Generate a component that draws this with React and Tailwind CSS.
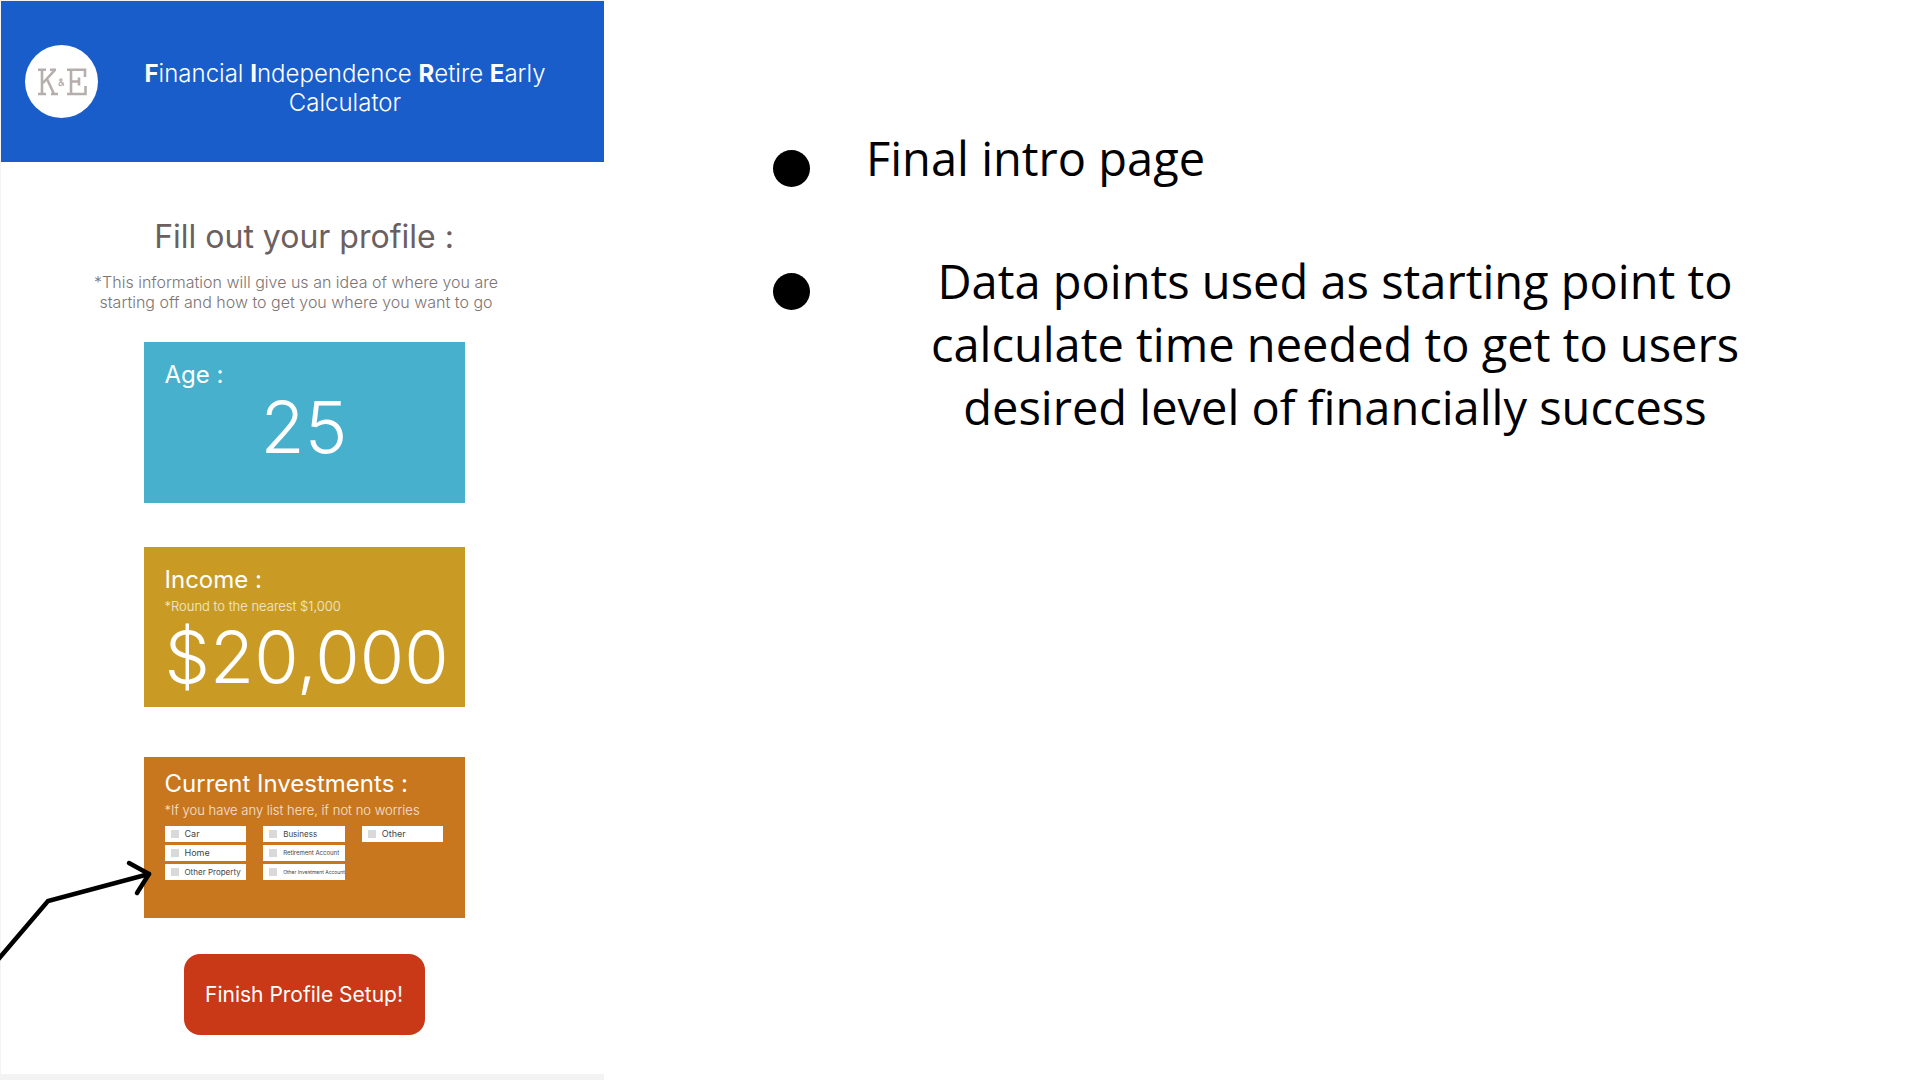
const INVESTMENTS = [
  { id: 'car', label: 'Car', size: 'text-[9px]' },
  { id: 'home', label: 'Home', size: 'text-[9px]' },
  { id: 'other-property', label: 'Other Property', size: 'text-[8px]' },
  { id: 'business', label: 'Business', size: 'text-[8px]' },
  { id: 'retirement', label: 'Retirement Account', size: 'text-[6px]' },
  { id: 'other-investment', label: 'Other Investment Account', size: 'text-[5px]' },
  { id: 'other', label: 'Other', size: 'text-[9px]' },
];

function Logo() {
  return (
    <div className="flex size-[73px] shrink-0 items-center justify-center rounded-full bg-white text-[#b5aeac]">
      <svg viewBox="0 0 50 28" className="h-7 w-[50px]" fill="none" stroke="currentColor" strokeWidth="2.6" aria-label="K and E" role="img">
        <path d="M1 1.8H9M5 1.8V26M1 26H9M18 1.8L6 15M13 1.8H19M10 11L17 26M14 26H21" />
        <path d="M30 1.8H48V9M34 1.8V26M30 26H48.5V18M34 13.5H42M42 9.5V17.5" />
        <path strokeWidth="1.3" d="M27 17.5L22.8 12.500C22.3 10.5 25.5 10.5 25 12.5C24.5 13.7 21.8 14.5 22 16.5C22.5 18.5 25.5 17.8 26.5 14.5" />
      </svg>
    </div>
  );
}

function Header() {
  return (
    <header className="flex h-[161px] items-center gap-3 bg-[#195dcb] px-6">
      <Logo />
      <h1 className="flex-1 pt-3 text-center text-2xl leading-[29px] font-light text-white">
        <span className="font-bold">F</span>inancial <span className="font-bold">I</span>ndependence{' '}
        <span className="font-bold">R</span>etire <span className="font-bold">E</span>arly
        <br />
        Calculator
      </h1>
    </header>
  );
}

function Arrow() {
  return (
    <svg className="pointer-events-none absolute top-[100px] -left-36 h-[110px] w-40" viewBox="0 0 160 110" fill="none" stroke="#000" strokeWidth="4.5" strokeLinecap="round" aria-hidden="true">
      <path d="M-4 105L48 44L149 17" />
      <path d="M129 6L149 17L137 36" strokeLinejoin="round" />
    </svg>
  );
}

function ProfileForm() {
  return (
    <form className="flex flex-col items-center pt-[55px] pr-6 pb-[39px] pl-[27px]">
      <h2 className="text-[32px] leading-10 font-normal text-[#6b6060]">Fill out your profile :</h2>
      <p className="mt-[15px] mr-4 text-center text-base leading-5 font-light text-[#7d7474]">
        *This information will give us an idea of where you are
        <br />
        starting off and how to get you where you want to go
      </p>

      <div className="mt-[30px] h-[161px] w-[321px] bg-[#46b0cd] px-[21px] pt-[18px] text-white">
        <label htmlFor="age" className="block text-2xl leading-[30px] font-normal">Age :</label>
        <input id="age" type="text" inputMode="numeric" defaultValue="25" className="block h-[72px] w-full bg-transparent text-center text-7xl leading-[72px] font-light outline-none" />
      </div>

      <div className="mt-11 h-[160px] w-[321px] bg-[#c99b24] pt-[18px] pl-[21px] text-white">
        <label htmlFor="income" className="block text-2xl leading-[30px] font-normal">Income :</label>
        <p className="text-[13px] leading-[22px] font-light text-white/80">*Round to the nearest $1,000</p>
        <input id="income" type="text" defaultValue="$20,000" className="block h-20 w-full bg-transparent text-7xl leading-[80px] font-light outline-none" />
      </div>

      <fieldset className="relative mt-[50px] h-[161px] w-[321px] bg-[#c8771e] px-[21px] pt-3 text-white">
        <Arrow />
        <h3 className="text-2xl leading-[30px] font-normal">Current Investments :</h3>
        <p className="text-[13px] leading-[22px] font-light text-white/80">*If you have any list here, if not no worries</p>
        <div className="mt-[5px] grid grid-flow-col grid-cols-3 grid-rows-3 gap-x-[17px] gap-y-[3px]">
          {INVESTMENTS.map(({ id, label, size }) => (
            <label key={id} className="flex h-4 items-center gap-[6px] overflow-hidden bg-white pl-[6px] text-[#444]">
              <input type="checkbox" name={id} className="size-2 shrink-0 appearance-none bg-[#d9d9d9] checked:bg-[#195dcb]" />
              <span className={size + ' whitespace-nowrap font-normal leading-4'}>{label}</span>
            </label>
          ))}
        </div>
      </fieldset>

      <button type="button" className="mt-9 h-[81px] w-[241px] rounded-2xl bg-[#c93817] text-[21px] font-normal text-white">
        Finish Profile Setup!
      </button>
    </form>
  );
}

function Notes() {
  return (
    <ul className="flex flex-1 flex-col gap-[60px] pt-[127px] pr-[116px] pl-[169px] font-['Open_Sans','Noto_Sans',sans-serif] text-[47px] leading-[63px] text-black">
      <li className="flex gap-14">
        <span className="mt-[23px] size-[37px] shrink-0 rounded-full bg-black" />
        <p>Final intro page</p>
      </li>
      <li className="flex gap-14">
        <span className="mt-[23px] size-[37px] shrink-0 rounded-full bg-black" />
        <p className="flex-1 text-center">
          Data points used as starting point to
          <br />
          calculate time needed to get to users
          <br />
          desired level of financially success
        </p>
      </li>
    </ul>
  );
}

export default function App() {
  return (
    <div className="flex min-h-screen overflow-x-hidden bg-white font-['Inter',sans-serif]">
      <section className="w-[604px] shrink-0 border-t border-b-[6px] border-l border-[#f3f3f3]">
        <Header />
        <ProfileForm />
      </section>
      <Notes />
    </div>
  );
}
